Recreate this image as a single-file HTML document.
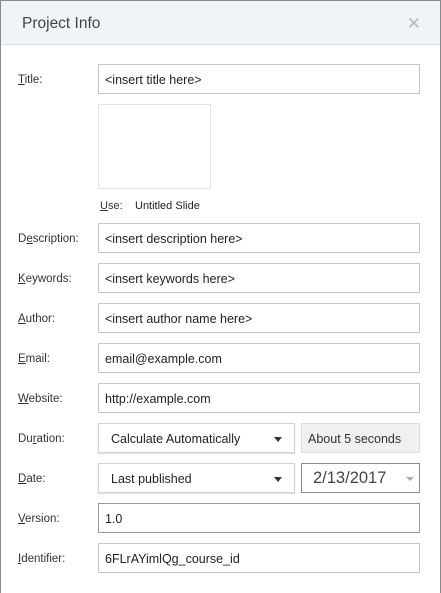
<!DOCTYPE html>
<html><head><style>
*{box-sizing:border-box;margin:0;padding:0}
body{width:441px;height:593px;overflow:hidden;background:#fff;font-family:"Liberation Sans",sans-serif;color:#333;position:relative}
.frame{position:absolute;left:0;top:0;width:441px;height:593px;border:1px solid #8a8a8a;border-bottom:none}
.hdr{position:absolute;left:1px;top:1px;width:439px;height:44px;background:#f1f4f7;border-bottom:1px solid #d5dade}
.hdr span{position:absolute;left:21px;top:14px;font-size:15.5px;color:#444}
.x{position:absolute;right:19px;top:13px;font-size:17px;color:#bbb}
.lbl{position:absolute;left:18px;font-size:11.5px;color:#333;margin-top:2px}
.lbl u{text-decoration:underline}
.in{position:absolute;left:98px;width:322px;height:30px;border:1px solid #c2c6ca;font-size:12.5px;padding:8px 0 0 6px;color:#222;background:#fff}
.dd{position:absolute;left:98px;width:197px;height:30px;border:1px solid #cfd2d5;box-shadow:0 1px 1px #ddd;font-size:12.5px;padding:8px 0 0 12px;color:#222}
.dd:after{content:"";position:absolute;right:12px;top:13px;border-left:4px solid transparent;border-right:4px solid transparent;border-top:5px solid #333}
</style></head><body>
<div class="frame"></div>
<div class="hdr"><span>Project Info</span><div class="x">✕</div></div>

<div class="lbl" style="top:72px"><u>T</u>itle:</div>
<div class="in" style="top:64px">&lt;insert title here&gt;</div>
<div style="position:absolute;left:98px;top:104px;width:113px;height:85px;border:1px solid #e3e3e3"></div>
<div style="position:absolute;left:100px;top:200px;font-size:11px;color:#333"><u>U</u>se:</div>
<div style="position:absolute;left:135px;top:200px;font-size:11px;color:#222">Untitled Slide</div>

<div class="lbl" style="top:231px">D<u>e</u>scription:</div>
<div class="in" style="top:223px">&lt;insert description here&gt;</div>
<div class="lbl" style="top:271px"><u>K</u>eywords:</div>
<div class="in" style="top:263px">&lt;insert keywords here&gt;</div>
<div class="lbl" style="top:311px"><u>A</u>uthor:</div>
<div class="in" style="top:303px">&lt;insert author name here&gt;</div>
<div class="lbl" style="top:351px"><u>E</u>mail:</div>
<div class="in" style="top:343px">email@example.com</div>
<div class="lbl" style="top:391px"><u>W</u>ebsite:</div>
<div class="in" style="top:383px">http://example.com</div>

<div class="lbl" style="top:431px">Du<u>r</u>ation:</div>
<div class="dd" style="top:423px">Calculate Automatically</div>
<div style="position:absolute;left:301px;top:423px;width:119px;height:30px;background:#f0f0f0;border:1px solid #dcdcdc;font-size:12.5px;padding:8px 0 0 6px;color:#333">About 5 seconds</div>

<div class="lbl" style="top:471px"><u>D</u>ate:</div>
<div class="dd" style="top:463px">Last published</div>
<div style="position:absolute;left:301px;top:463px;width:119px;height:30px;border:1px solid #8c8c8c;font-size:16.5px;padding:5px 0 0 11px;color:#444">2/13/2017<span style="position:absolute;right:5px;top:13px;border-left:4px solid transparent;border-right:4px solid transparent;border-top:4px solid #aaa"></span></div>

<div class="lbl" style="top:511px"><u>V</u>ersion:</div>
<div class="in" style="top:503px;border-color:#999">1.0</div>
<div class="lbl" style="top:551px"><u>I</u>dentifier:</div>
<div class="in" style="top:543px">6FLrAYimlQg_course_id</div>
</body></html>
